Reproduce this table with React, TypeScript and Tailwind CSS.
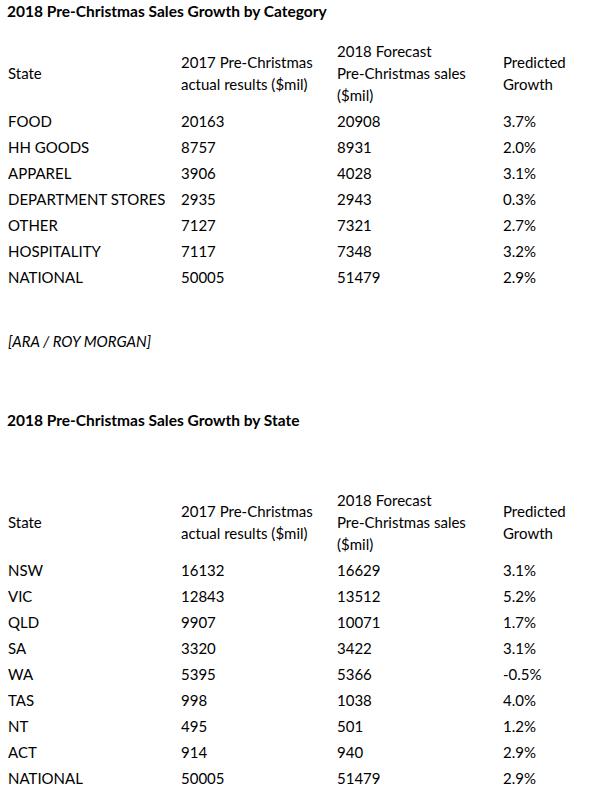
const categoryRows = [
  ["FOOD", "20163", "20908", "3.7%"],
  ["HH GOODS", "8757", "8931", "2.0%"],
  ["APPAREL", "3906", "4028", "3.1%"],
  ["DEPARTMENT STORES", "2935", "2943", "0.3%"],
  ["OTHER", "7127", "7321", "2.7%"],
  ["HOSPITALITY", "7117", "7348", "3.2%"],
  ["NATIONAL", "50005", "51479", "2.9%"],
];

const stateRows = [
  ["NSW", "16132", "16629", "3.1%"],
  ["VIC", "12843", "13512", "5.2%"],
  ["QLD", "9907", "10071", "1.7%"],
  ["SA", "3320", "3422", "3.1%"],
  ["WA", "5395", "5366", "-0.5%"],
  ["TAS", "998", "1038", "4.0%"],
  ["NT", "495", "501", "1.2%"],
  ["ACT", "914", "940", "2.9%"],
  ["NATIONAL", "50005", "51479", "2.9%"],
];

function SalesTable({ rows }: { rows: string[][] }) {
  return (
    <table className="w-full table-fixed border-collapse text-left">
      <colgroup>
        <col className="w-[181px]" />
        <col className="w-[156px]" />
        <col className="w-[166px]" />
        <col />
      </colgroup>
      <thead>
        <tr className="h-[70px]">
          <th className="pl-2 align-middle font-normal">State</th>
          <th className="whitespace-nowrap align-middle font-normal">
            2017 Pre-Christmas
            <br />
            actual results ($mil)
          </th>
          <th className="whitespace-nowrap align-middle font-normal">
            2018 Forecast
            <br />
            Pre-Christmas sales
            <br />
            ($mil)
          </th>
          <th className="align-middle font-normal">
            Predicted
            <br />
            Growth
          </th>
        </tr>
      </thead>
      <tbody>
        {rows.map((r, i) => (
          <tr key={i} className="h-[26px]">
            <td className="whitespace-nowrap pl-2 align-middle">{r[0]}</td>
            <td className="align-middle">{r[1]}</td>
            <td className="align-middle">{r[2]}</td>
            <td className="align-middle">{r[3]}</td>
          </tr>
        ))}
      </tbody>
    </table>
  );
}

export default function App() {
  return (
    <div className="min-h-[798px] w-[597px] bg-white text-[15px] leading-[22px] text-black [font-family:Lato,'Open_Sans',sans-serif]">
      <h2 className="pl-[7px] text-[15.5px] font-bold">2018 Pre-Christmas Sales Growth by Category</h2>
      <div className="mt-4">
        <SalesTable rows={categoryRows} />
      </div>
      <p className="mt-10 pl-2 italic">[ARA / ROY MORGAN]</p>
      <h2 className="mt-[57px] pl-[7px] text-[15.5px] font-bold">2018 Pre-Christmas Sales Growth by State</h2>
      <div className="mt-14">
        <SalesTable rows={stateRows} />
      </div>
    </div>
  );
}
